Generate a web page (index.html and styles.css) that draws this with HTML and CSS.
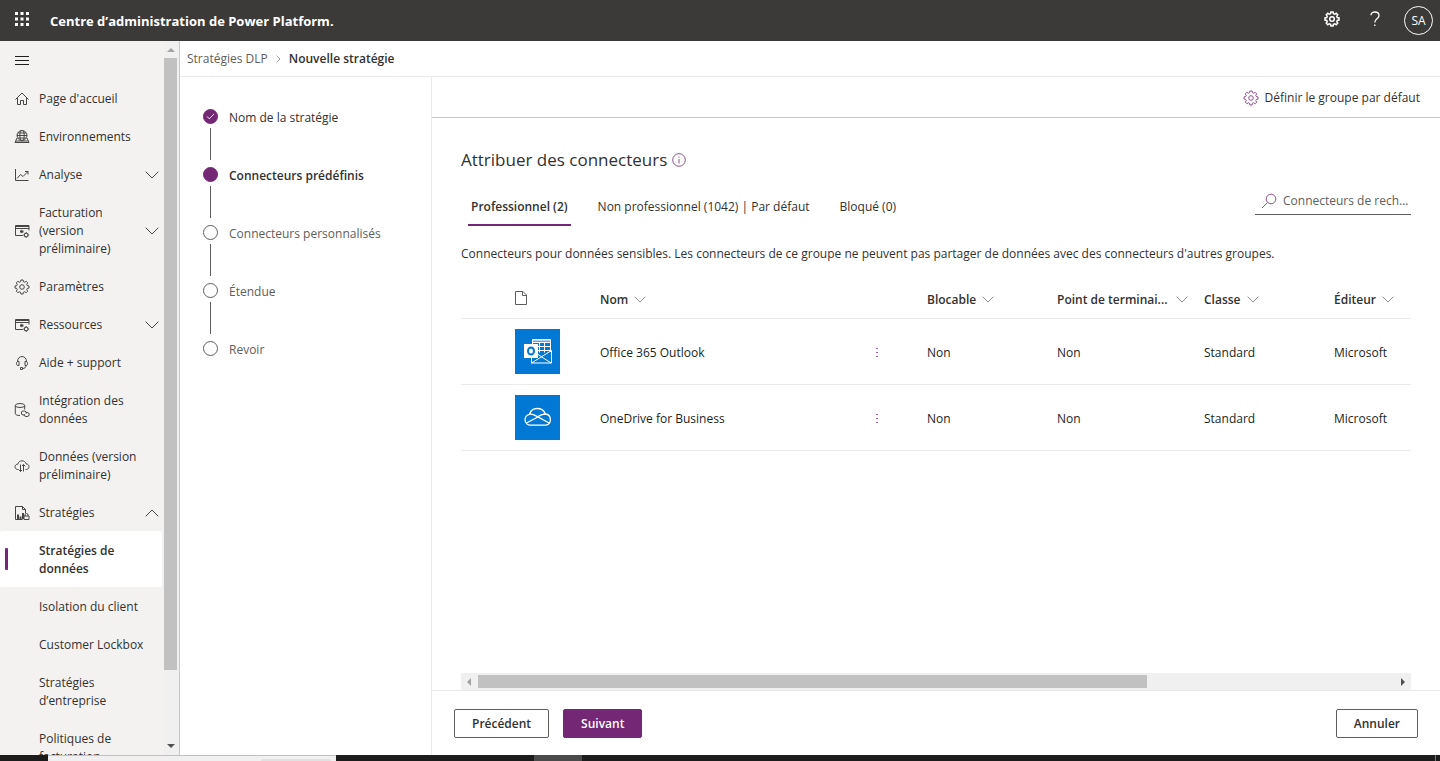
FILE: index.html
```html
<!DOCTYPE html>
<html lang="fr">
<head>
<meta charset="utf-8">
<meta name="viewport" content="width=device-width, initial-scale=1">
<title>Centre d’administration de Power Platform</title>
<link rel="stylesheet" href="styles.css">
</head>
<body>
<svg class="sprite" aria-hidden="true">
  <symbol id="gear" viewBox="-8 -8 16 16"><path d="M-1.1-7H1.1L1.4-5.3 2.76-4.74 4.17-5.73 5.73-4.17 4.74-2.76 5.3-1.4 7-1.1V1.1L5.3 1.4 4.74 2.76 5.73 4.17 4.17 5.73 2.76 4.74 1.4 5.3 1.1 7H-1.1L-1.4 5.3-2.76 4.74-4.17 5.73-5.73 4.17-4.74 2.76-5.3 1.4-7 1.1V-1.1L-5.3-1.4-4.74-2.76-5.73-4.17-4.17-5.73-2.76-4.74-1.4-5.3Z"/><circle r="2.3"/></symbol>
  <symbol id="down" viewBox="0 0 14 8"><path d="M.7.7 7 7 13.3.7"/></symbol>
  <symbol id="up" viewBox="0 0 14 8"><path d="M.7 7.3 7 1 13.3 7.3"/></symbol>
  <symbol id="window-gear" viewBox="0 0 16 16"><path d="M9 12.5H1.500V2.500H15V7.500M1.500 5.500H15M1.500 3.500H15M6 8.500H9.500M7.700 6.800V10.200M6.500 7.300 9 9.800M9 7.300 6.500 9.800"/><circle cx="12.200" cy="12" r="1.800"/><path d="M12.200 9V10.200M12.200 13.800V15M9.200 12H10.400M14 12H15.200M10.100 9.900 10.900 10.700M13.500 13.300 14.300 14.100M14.300 9.900 13.500 10.700M10.900 13.300 10.100 14.100"/></symbol>
</svg>

<header class="topbar">
  <button class="icon-button waffle" aria-label="Lanceur d’applications">
    <svg viewBox="0 0 14 14" width="14" height="14"><path d="M0 0h3v3H0zM5.5 0h3v3h-3zM11 0h3v3h-3zM0 5.5h3v3H0zM5.5 5.5h3v3h-3zM11 5.5h3v3h-3zM0 11h3v3H0zM5.5 11h3v3h-3zM11 11h3v3h-3z"/></svg>
  </button>
  <h1 class="product">Centre d’administration de Power Platform.</h1>
  <button class="icon-button" aria-label="Paramètres"><svg class="line heavy" width="16" height="16"><use href="#gear"/></svg></button>
  <button class="icon-button" aria-label="Aide"><svg class="line help" viewBox="0 0 10 16" width="10" height="16"><path d="M1 4.200C1 2.200 2.700 1 4.800 1 7.200 1 9 2.300 9 4.500 9 8 4.800 7.600 4.800 11.500M4.800 13.500V15"/></svg></button>
  <button class="avatar" aria-label="Compte SA">SA</button>
</header>

<div class="shell">
  <aside class="sidebar">
    <nav class="nav" aria-label="Navigation principale">
      <button class="nav-item" aria-label="Réduire la navigation"><svg class="line menu-icon" viewBox="0 0 16 16" width="16" height="16"><path d="M1 3.500H15M1 7.500H15M1 11.500H15"/></svg></button>
      <a class="nav-item" href="#"><svg class="line" viewBox="0 0 16 16" width="16" height="16"><path d="M1.500 8.500 8 2 14.500 8.500M3.500 7V13.500H6.500V9.500H9.500V13.500H12.500V7"/></svg><span class="nav-label">Page d'accueil</span></a>
      <a class="nav-item" href="#"><svg class="line" viewBox="0 0 16 16" width="16" height="16"><circle cx="8" cy="6.500" r="5"/><ellipse cx="8" cy="6.500" rx="2.200" ry="5"/><path d="M3 6.500H13M4 4H12M4 9H12M3 9 1 13.500H15L13 9M2 12H14"/></svg><span class="nav-label">Environnements</span></a>
      <button class="nav-item"><svg class="line" viewBox="0 0 16 16" width="16" height="16"><path d="M1.500 2V13.500H14.500M3 11.500 6.500 7.500 9 9.500 14 4.500M11 4.500H14V7.500"/></svg><span class="nav-label">Analyse</span><svg class="line" width="14" height="8"><use href="#down"/></svg></button>
      <button class="nav-item"><svg class="line" width="16" height="16"><use href="#window-gear"/></svg><span class="nav-label">Facturation (version préliminaire)</span><svg class="line" width="14" height="8"><use href="#down"/></svg></button>
      <a class="nav-item" href="#"><svg class="line" width="16" height="16"><use href="#gear"/></svg><span class="nav-label">Paramètres</span></a>
      <button class="nav-item"><svg class="line" width="16" height="16"><use href="#window-gear"/></svg><span class="nav-label">Ressources</span><svg class="line" width="14" height="8"><use href="#down"/></svg></button>
      <a class="nav-item" href="#"><svg class="line" viewBox="0 0 16 16" width="16" height="16"><path d="M3.500 6.500C3.500 3.500 5.500 1.500 8 1.500S12.500 3.500 12.500 6.500M5 6.500H4C2.800 6.500 2.500 7.500 2.500 8.500S2.800 10.500 4 10.500H5ZM11 6.500H12C13.200 6.500 13.500 7.500 13.500 8.500S13.200 10.500 12 10.500H11ZM12 10.500C12 12.500 10.500 13.500 8.500 13.500M6.500 12.500H8.500V14.500H6.500Z"/></svg><span class="nav-label">Aide + support</span></a>
      <a class="nav-item" href="#"><svg class="line" viewBox="0 0 16 16" width="16" height="16"><ellipse cx="6" cy="3.500" rx="4.700" ry="2"/><path d="M1.300 3.500V11.500C1.300 12.800 3.200 13.500 6 13.500M10.700 3.500V7.500M10.500 13H9.300A2 2 0 0 1 9.300 9H10.500A2 2 0 0 1 12.200 11.500M12 10.500H13.200A2 2 0 0 1 13.200 14.500H12A2 2 0 0 1 10.200 12"/></svg><span class="nav-label">Intégration des données</span></a>
      <a class="nav-item" href="#"><svg class="line" viewBox="0 0 16 16" width="16" height="16"><path d="M4.500 11.500H3.800C2.200 11.500 1 10.300 1 8.800S2.200 6.200 3.800 6.200C4.300 4 6 2.800 8 2.800 10 2.800 11.700 4 12.200 6 14 6 15 7.200 15 8.700S13.900 11.500 12.300 11.500H11.500M6.500 6.500V13.500M4.700 11.700 6.500 13.500 8 12M9.500 13.500V6.500M8 8 9.500 6.500 11.300 8.300"/></svg><span class="nav-label">Données (version préliminaire)</span></a>
      <button class="nav-item" aria-expanded="true"><svg class="line" viewBox="0 0 16 16" width="16" height="16"><path d="M8.500 14.500H1.500V1.500H8.500L11.500 4.500V8M8.500 1.500V4.500H11.500M10 11H15V14.500H10ZM11 11V10A1.500 1.500 0 0 1 14 10V11"/><path class="thick" d="M4 14V9.500M6.500 14V11.500M9 14V8"/></svg><span class="nav-label">Stratégies</span><svg class="line" width="14" height="8"><use href="#up"/></svg></button>
      <a class="nav-item sub selected" href="#" aria-current="page"><span class="nav-label">Stratégies de données</span></a>
      <a class="nav-item sub" href="#"><span class="nav-label">Isolation du client</span></a>
      <a class="nav-item sub" href="#"><span class="nav-label">Customer Lockbox</span></a>
      <a class="nav-item sub" href="#"><span class="nav-label">Stratégies d’entreprise</span></a>
      <a class="nav-item sub" href="#"><span class="nav-label">Politiques de facturation</span></a>
    </nav>
    <div class="vscroll" aria-hidden="true">
      <svg viewBox="0 0 8 4" width="8" height="4"><path fill="#a3a3a3" d="M0 4 4 0 8 4Z"/></svg>
      <div class="vtrack"><div class="vthumb"></div></div>
      <svg viewBox="0 0 8 4" width="8" height="4"><path fill="#505050" d="M0 0H8L4 4Z"/></svg>
    </div>
  </aside>

  <main class="main">
    <nav class="breadcrumb" aria-label="Fil d’Ariane">
      <a href="#">Stratégies DLP</a>
      <svg class="line faint" viewBox="0 0 5 8" width="5" height="8"><path d="M.5.500 4 4 .5 7.500"/></svg>
      <strong>Nouvelle stratégie</strong>
    </nav>
    <div class="workspace">
      <ol class="steps">
        <li class="step done"><span class="dot"><svg class="line" viewBox="0 0 9 7" width="9" height="7"><path d="M1 3.500 3.300 5.800 8 1"/></svg></span><span class="step-label">Nom de la stratégie</span></li>
        <li class="step current" aria-current="step"><span class="dot"></span><span class="step-label">Connecteurs prédéfinis</span></li>
        <li class="step"><span class="dot"></span><span class="step-label">Connecteurs personnalisés</span></li>
        <li class="step"><span class="dot"></span><span class="step-label">Étendue</span></li>
        <li class="step"><span class="dot"></span><span class="step-label">Revoir</span></li>
      </ol>

      <section class="panel">
        <div class="toolbar">
          <button class="command"><svg class="line" width="16" height="16"><use href="#gear"/></svg>Définir le groupe par défaut</button>
        </div>
        <div class="content">
          <h2 class="title">Attribuer des connecteurs <svg class="line" viewBox="0 0 14 14" width="14" height="14"><circle cx="7" cy="7" r="6.300"/><path d="M7 6V10.500M7 3.500V4.700"/></svg></h2>
          <div class="tab-row">
            <div class="tabs" role="tablist">
              <button class="tab active" role="tab" aria-selected="true">Professionnel (2)</button>
              <button class="tab" role="tab" aria-selected="false">Non professionnel (1042) | Par défaut</button>
              <button class="tab" role="tab" aria-selected="false">Bloqué (0)</button>
            </div>
            <label class="search">
              <svg class="line" viewBox="0 0 16 16" width="16" height="16"><circle cx="10" cy="6" r="4.800"/><path d="M6.500 9.500 1 15"/></svg>
              <input type="text" aria-label="Rechercher des connecteurs" placeholder="Connecteurs de rech...">
            </label>
          </div>
          <p class="description">Connecteurs pour données sensibles. Les connecteurs de ce groupe ne peuvent pas partager de données avec des connecteurs d'autres groupes.</p>
          <table class="grid">
            <colgroup><col class="c-icon"><col><col class="c-menu"><col class="c-block"><col class="c-point"><col class="c-class"><col class="c-editor"></colgroup>
            <thead>
              <tr>
                <th class="icon-cell" aria-label="Icône"><svg class="line" viewBox="0 0 12 14" width="12" height="14"><path d="M.5.500H8L11.500 4V13.500H.5ZM7.500.500V4.500H11.500"/></svg></th>
                <th><button class="sort">Nom<svg class="line" width="12" height="7"><use href="#down"/></svg></button></th>
                <th aria-label="Actions"></th>
                <th><button class="sort">Blocable<svg class="line" width="12" height="7"><use href="#down"/></svg></button></th>
                <th><button class="sort spread">Point de terminai...<svg class="line" width="12" height="7"><use href="#down"/></svg></button></th>
                <th><button class="sort">Classe<svg class="line" width="12" height="7"><use href="#down"/></svg></button></th>
                <th><button class="sort">Éditeur<svg class="line" width="12" height="7"><use href="#down"/></svg></button></th>
              </tr>
            </thead>
            <tbody>
              <tr>
                <td class="icon-cell"><span class="tile"><svg viewBox="0 0 28 26" width="28" height="26" fill="none" stroke="#fff"><path d="M8.500 7V1.500H26.500V14M8.500 4.500H26.500M14 8.500H26.500M14 12.500H26.500M15.500 4V14.500M20.500 4V14.500M27.500 12.500V25H7.500V20M14 16.500 27 25M7.500 25 27.500 12.500"/><path d="M8 2.500H27" stroke-width="2" stroke-opacity=".7"/><rect x="0" y="6" width="14" height="14" fill="#fff" stroke="none"/><ellipse cx="7" cy="13" rx="3" ry="3.500" stroke="#0078d4" stroke-width="2"/></svg></span></td>
                <td>Office 365 Outlook</td>
                <td><button class="more" aria-label="Actions pour Office 365 Outlook"><svg viewBox="0 0 2 10" width="2" height="10"><path d="M0 0h2v1H0zM0 4h2v1H0zM0 8h2v1H0z"/></svg></button></td>
                <td>Non</td><td>Non</td><td>Standard</td><td>Microsoft</td>
              </tr>
              <tr>
                <td class="icon-cell"><span class="tile"><svg viewBox="0 0 28 20" width="28" height="20" fill="none" stroke="#fff" stroke-width="1.300"><path d="M6.500 18.200A5.500 5.500 0 0 1 5.500 7.300C6.500 3.800 9.800 1.500 13.300 1.500 17 1.500 20.100 3.700 21.400 7A5.700 5.700 0 0 1 22 18.200ZM5.500 7.300C7.800 6.900 9.800 7.500 12 8.900L26 16.500M2.500 16 12 11C15 9 17.500 7 21.400 7"/></svg></span></td>
                <td>OneDrive for Business</td>
                <td><button class="more" aria-label="Actions pour OneDrive for Business"><svg viewBox="0 0 2 10" width="2" height="10"><path d="M0 0h2v1H0zM0 4h2v1H0zM0 8h2v1H0z"/></svg></button></td>
                <td>Non</td><td>Non</td><td>Standard</td><td>Microsoft</td>
              </tr>
            </tbody>
          </table>
          <div class="hscroll" aria-hidden="true">
            <svg viewBox="0 0 4 8" width="4" height="8"><path fill="#a3a3a3" d="M4 0V8L0 4Z"/></svg>
            <div class="htrack"><div class="hthumb"></div></div>
            <svg viewBox="0 0 4 8" width="4" height="8"><path fill="#505050" d="M0 0 4 4 0 8Z"/></svg>
          </div>
        </div>
        <footer class="footer">
          <button class="button">Précédent</button>
          <button class="button primary">Suivant</button>
          <button class="button cancel">Annuler</button>
        </footer>
      </section>
    </div>
  </main>
</div>
<div class="taskbar" aria-hidden="true"><span class="task-search"><span class="task-pill"></span></span><span class="task-active"></span><span class="task-desktop"></span></div>
</body>
</html>
```
FILE: styles.css
```css
* { box-sizing: border-box; }

body {
  margin: 0;
  height: 100vh;
  overflow: hidden;
  display: flex;
  flex-direction: column;
  background: #fff;
  color: #323130;
  font: 12px/18px "Open Sans", "Noto Sans", sans-serif;
}

button, input { font: inherit; color: inherit; }
button { margin: 0; padding: 0; border: 0; background: none; cursor: pointer; text-align: left; }
a { color: inherit; text-decoration: none; }
svg { flex: none; display: block; }
.sprite { display: none; }
.line { fill: none; stroke: currentColor; stroke-width: 1; }
.heavy { stroke-width: 1.5; }
.thick { stroke-width: 2; }
.faint { color: #a19f9d; }

/* Top bar */
.topbar {
  flex: none;
  height: 41px;
  display: flex;
  align-items: center;
  padding-right: 7px;
  background: #3b3a39;
  color: #fff;
}
.icon-button { width: 43px; height: 41px; padding-bottom: 3px; display: flex; align-items: center; justify-content: center; }
.waffle { fill: #fff; }
.help { stroke-width: 1.3; }
.product { flex: 1; margin: 0 0 0 7px; font-size: 13px; font-weight: 700; }
.avatar {
  width: 29px;
  height: 29px;
  margin-left: 8px;
  border: 1px solid #fff;
  border-radius: 50%;
  text-align: center;
}

.shell { flex: 1; min-height: 0; display: flex; }

/* Sidebar */
.sidebar {
  flex: none;
  width: 180px;
  display: flex;
  justify-content: space-between;
  background: #f3f2f1;
  border-right: 1px solid #c8c8c8;
}
.nav { width: 162px; overflow: hidden; }
.nav-item {
  width: 100%;
  display: flex;
  align-items: center;
  gap: 9px;
  min-height: 38px;
  padding: 11px 3px 9px 14px;
}
.nav-item svg { color: #484644; }
.nav-item .menu-icon { color: #201f1e; }
.nav-label { flex: 1; }
.sub { padding: 11px 16px 9px 39px; }
.selected {
  position: relative;
  background: #fff;
  border-radius: 2px;
  font-weight: 600;
}
.selected::before {
  content: "";
  position: absolute;
  left: 5px;
  top: 17px;
  width: 3px;
  height: 22px;
  border-radius: 1px;
  background: #742774;
}
.vscroll {
  width: 15px;
  display: flex;
  flex-direction: column;
  align-items: center;
  gap: 6px;
  padding: 7px 2px 7px 0;
  background: #f0f0f0;
}
.vtrack { flex: 1; align-self: stretch; }
.vthumb { height: 90%; background: #c1c1c1; }

/* Main area */
.main { flex: 1; min-width: 0; display: flex; flex-direction: column; }
.breadcrumb {
  height: 36px;
  display: flex;
  align-items: center;
  gap: 8px;
  padding-left: 7px;
  border-bottom: 1px solid #eaeaea;
  color: #605e5c;
}
.breadcrumb strong { color: #323130; font-weight: 600; }
.workspace { flex: 1; min-height: 0; display: flex; }

.steps {
  flex: none;
  width: 252px;
  margin: 0;
  padding: 32px 20px 0 23px;
  list-style: none;
  border-right: 1px solid #eaeaea;
}
.step {
  position: relative;
  height: 58px;
  display: flex;
  align-items: flex-start;
  gap: 11px;
  color: #605e5c;
}
.step:not(:last-child)::after {
  content: "";
  position: absolute;
  left: 7px;
  top: 19px;
  width: 1px;
  height: 32px;
  background: #605e5c;
}
.dot {
  width: 15px;
  height: 15px;
  display: flex;
  align-items: center;
  justify-content: center;
  border: 1px solid #605e5c;
  border-radius: 50%;
  color: #fff;
}
.done .dot, .current .dot { background: #742774; border-color: #742774; }
.done, .current { color: #323130; }
.current { font-weight: 600; }

.panel { flex: 1; min-width: 0; display: flex; flex-direction: column; }
.toolbar {
  height: 41px;
  display: flex;
  align-items: center;
  justify-content: flex-end;
  padding: 2px 20px 0 0;
  border-bottom: 1px solid #c8c8c8;
}
.command { display: flex; align-items: center; gap: 6px; }
.command svg, .title svg, .search svg { color: #742774; opacity: 0.8; }

.content { flex: 1; min-height: 0; display: flex; flex-direction: column; padding: 30px 29px 0; }
.title {
  display: flex;
  align-items: center;
  gap: 5px;
  margin: 0;
  font-size: 17px;
  line-height: 24px;
  font-weight: 400;
}
.tab-row { display: flex; justify-content: space-between; padding-top: 15px; }
.tabs { display: flex; gap: 24px; padding-left: 7px; }
.tab { height: 39px; padding: 2px 3px 0; border-bottom: 2px solid transparent; }
.active { border-color: #742774; font-weight: 600; }
.search {
  width: 156px;
  height: 28px;
  display: flex;
  align-items: center;
  gap: 6px;
  padding-left: 6px;
  border-bottom: 1px solid #605e5c;
}
.search input { min-width: 0; flex: 1; padding: 0; border: 0; outline: 0; background: none; }
.search input::placeholder { color: #605e5c; opacity: 1; }
.description { margin: 19px 0 16px; }

.grid { width: 100%; table-layout: fixed; border-collapse: collapse; }
.c-icon { width: 139px; }
.c-menu { width: 60px; }
.c-block { width: 130px; }
.c-point { width: 147px; }
.c-class { width: 130px; }
.c-editor { width: 77px; }
.grid th, .grid td { padding: 3px 0 0; text-align: left; border-bottom: 1px solid #edebe9; white-space: nowrap; }
.grid th { height: 39px; font-weight: 600; }
.grid td { height: 66px; color: #201f1e; }
.grid .icon-cell { padding: 0 0 0 54px; color: #605e5c; }
.sort { display: flex; align-items: center; gap: 6px; font-weight: 600; }
.sort svg { color: #797775; }
.spread { width: 131px; justify-content: space-between; }
.tile {
  width: 45px;
  height: 45px;
  display: flex;
  align-items: center;
  justify-content: center;
  background: #0078d4;
}
.more { width: 20px; height: 20px; display: flex; align-items: center; justify-content: center; fill: #742774; opacity: 0.7; }

.hscroll {
  height: 17px;
  margin-top: auto;
  display: flex;
  align-items: center;
  gap: 7px;
  padding: 0 6px;
  background: #f0f0f0;
}
.htrack { flex: 1; }
.hthumb { width: 73%; height: 13px; background: #c1c1c1; }

.footer {
  height: 65px;
  display: flex;
  align-items: flex-start;
  gap: 14px;
  padding: 18px 22px;
  border-top: 1px solid #eaeaea;
}
.button {
  height: 29px;
  padding: 0 17px;
  border: 1px solid #605e5c;
  border-radius: 2px;
  background: #fff;
  font-weight: 600;
  text-align: center;
}
.primary { background: #742774; border-color: #742774; color: #fff; }
.cancel { margin-left: auto; }

/* Desktop taskbar edge */
.taskbar { flex: none; height: 6px; display: flex; padding: 0 4px 0 48px; background: #1c1c1c; }
.task-search { width: 288px; display: flex; align-items: flex-end; justify-content: flex-end; padding-right: 5px; background: #f0f0f0; border-top: 1px solid #c1c1c1; }
.task-pill { width: 70px; height: 2px; border-radius: 2px 2px 0 0; background: #e1e1e1; }
.task-active { width: 48px; margin-left: 198px; background: #4a4a4a; }
.task-desktop { width: 1px; margin-left: auto; background: #797775; }
```
